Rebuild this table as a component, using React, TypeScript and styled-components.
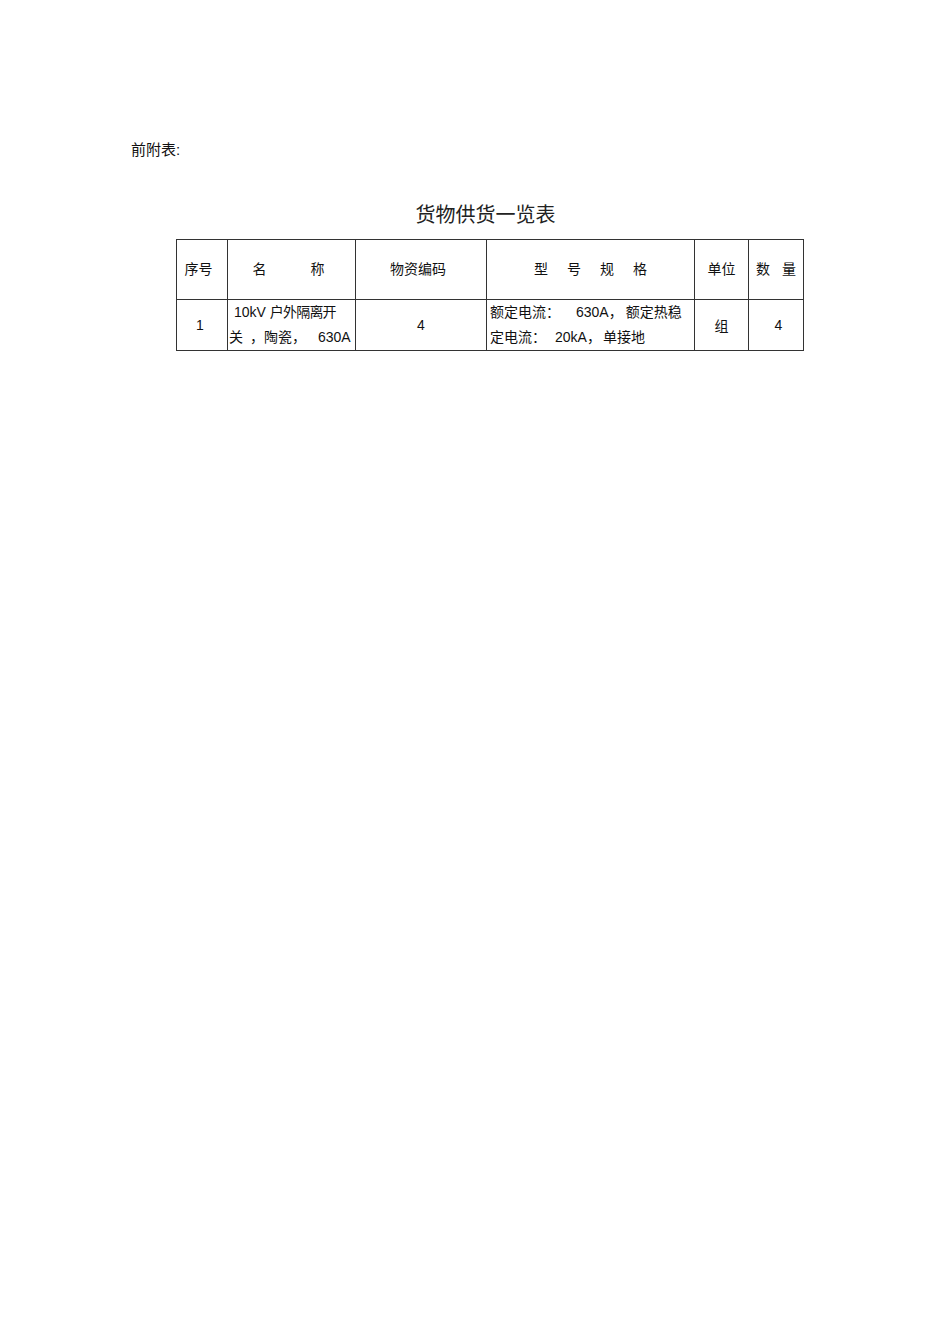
import React from "react";
import styled, { createGlobalStyle } from "styled-components";

const GlobalStyle = createGlobalStyle`
  html, body {
    margin: 0;
    padding: 0;
    background: #ffffff;
  }
  body {
    font-family: "Liberation Sans", "Noto Sans CJK SC", sans-serif;
    color: #111;
  }
`;

const Page = styled.div`
  width: 950px;
  min-height: 1334px;
  padding-top: 140px;
  box-sizing: border-box;
`;

const Preface = styled.div`
  margin-left: 131px;
  font-size: 15px;
  line-height: 20px;
`;

const Sheet = styled.div`
  width: 627px;
  margin-left: 176px;
  margin-top: 41px;
`;

const Title = styled.h1`
  margin: 0;
  padding-right: 8px;
  font-size: 20px;
  font-weight: normal;
  line-height: 28px;
  text-align: center;
  color: #222;
`;

const Table = styled.table`
  margin-top: 10px;
  width: 627px;
  table-layout: fixed;
  border-collapse: collapse;
  font-size: 14px;
`;

const Cell = styled.td<{ $height: number; $align?: string; $lift?: number; $shift?: number }>`
  height: ${({ $height }) => $height}px;
  padding: 0 ${({ $shift }) => ($shift && $shift > 0 ? $shift : 0)}px
    ${({ $lift }) => $lift || 0}px ${({ $shift }) => ($shift && $shift < 0 ? -$shift : 0)}px;
  border: 1px solid #333;
  text-align: ${({ $align }) => $align || "center"};
  vertical-align: middle;
  box-sizing: border-box;
`;

const Spread = styled.div<{ $gap: number }>`
  display: flex;
  justify-content: center;
  gap: ${({ $gap }) => $gap}px;
`;

const Lines = styled.div<{ $pad: number }>`
  padding: 0 0 0 ${({ $pad }) => $pad}px;
  font-size: 14px;
  line-height: 25px;
`;

const Line = styled.div`
  display: flex;
  white-space: pre;
`;

const Seg = styled.span<{ $left?: number; $tight?: boolean }>`
  margin-left: ${({ $left }) => $left || 0}px;
  letter-spacing: ${({ $tight }) => ($tight ? "-0.8px" : "normal")};
`;

const cols = [51, 128, 131, 208, 54, 55];

export default function App() {
  return (
    <Page>
      <GlobalStyle />
      <Preface>前附表:</Preface>
      <Sheet>
        <Title>货物供货一览表</Title>
        <Table>
          <colgroup>
            {cols.map((w, i) => (
              <col key={i} style={{ width: w }} />
            ))}
          </colgroup>
          <tbody>
            <tr>
              <Cell $height={60} $lift={3} $shift={7}>序号</Cell>
              <Cell $height={60} $lift={3} $shift={6}>
                <Spread $gap={44}>
                  <span>名</span>
                  <span>称</span>
                </Spread>
              </Cell>
              <Cell $height={60} $lift={3} $shift={6}>物资编码</Cell>
              <Cell $height={60} $lift={3}>
                <Spread $gap={19}>
                  <span>型</span>
                  <span>号</span>
                  <span>规</span>
                  <span>格</span>
                </Spread>
              </Cell>
              <Cell $height={60} $lift={3}>单位</Cell>
              <Cell $height={60} $lift={3}>
                <Spread $gap={12}>
                  <span>数</span>
                  <span>量</span>
                </Spread>
              </Cell>
            </tr>
            <tr>
              <Cell $height={50} $shift={4}>1</Cell>
              <Cell $height={50} $align="left">
                <Lines $pad={1}>
                  <Line>
                    <Seg $left={5}>10kV </Seg>
                    <Seg $tight>户外隔离开</Seg>
                  </Line>
                  <Line>
                    <Seg>关</Seg>
                    <Seg $left={7}>，陶瓷，</Seg>
                    <Seg $left={12}>630A</Seg>
                  </Line>
                </Lines>
              </Cell>
              <Cell $height={50}>4</Cell>
              <Cell $height={50} $align="left">
                <Lines $pad={3}>
                  <Line>
                    <Seg>额定电流：</Seg>
                    <Seg $left={16}>630A，</Seg>
                    <Seg $left={3}>额定热稳</Seg>
                  </Line>
                  <Line>
                    <Seg>定电流：</Seg>
                    <Seg $left={9}>20kA，</Seg>
                    <Seg $left={2}>单接地</Seg>
                  </Line>
                </Lines>
              </Cell>
              <Cell $height={50}>组</Cell>
              <Cell $height={50} $shift={-5}>4</Cell>
            </tr>
          </tbody>
        </Table>
      </Sheet>
    </Page>
  );
}
